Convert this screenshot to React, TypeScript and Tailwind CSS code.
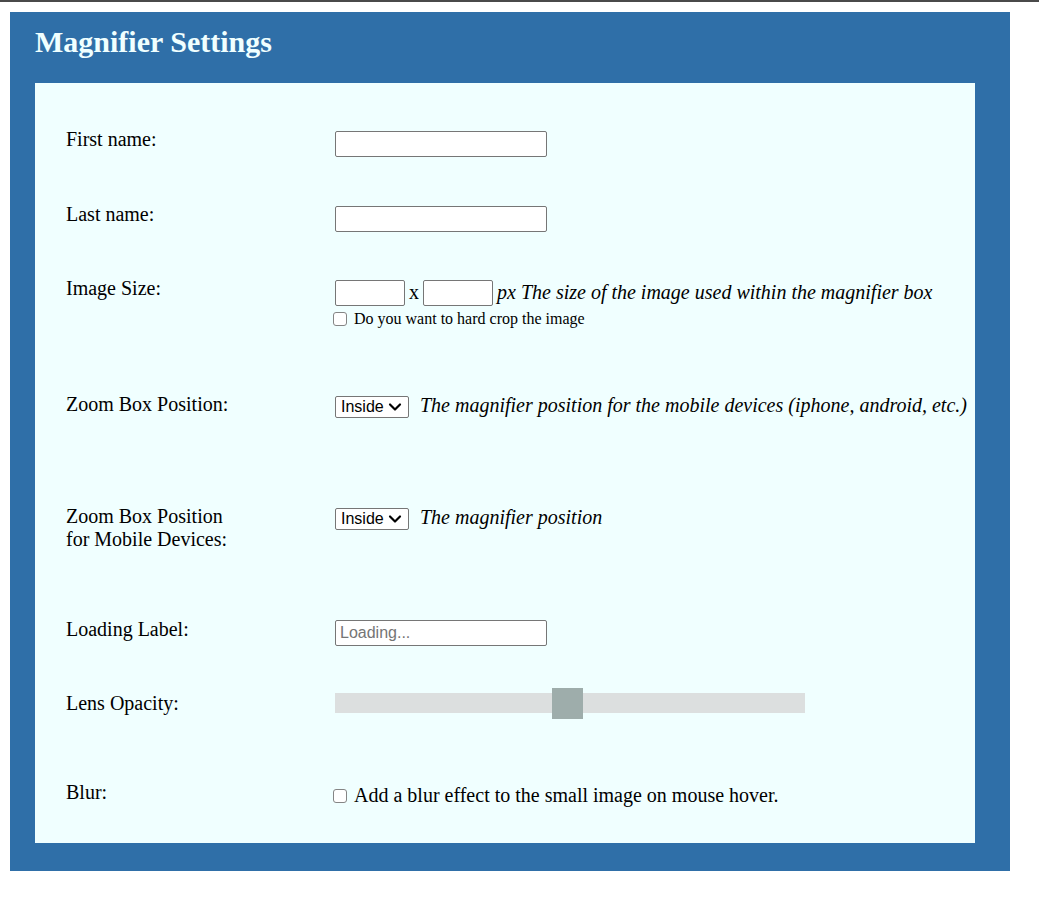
import { ChevronDown } from 'lucide-react';

function TextBox({ width = 'w-[212px]', placeholder }: { width?: string; placeholder?: string }) {
    return (
        <input
            type="text"
            placeholder={placeholder}
            className={`block ${width} h-[26px] border border-[#767676] rounded-[2px] bg-white px-[4px] text-[16px] font-['Liberation_Sans',Arial,sans-serif] text-black placeholder:text-[#757575] outline-none`}
        />
    );
}

function Select() {
    return (
        <div className="relative w-[74px] h-[22px] shrink-0">
            <select className="block appearance-none w-full h-full border border-[#767676] rounded-[2px] bg-white pl-[5px] pr-[16px] text-[16px] leading-none font-['Liberation_Sans',Arial,sans-serif] text-black outline-none">
                <option>Inside</option>
                <option>Outside</option>
            </select>
            <ChevronDown
                size={20}
                strokeWidth={2.6}
                className="absolute left-[50px] top-[1px] pointer-events-none text-black"
            />
        </div>
    );
}

function Check() {
    return (
        <input
            type="checkbox"
            className="block m-0 w-[14px] h-[14px] shrink-0 appearance-none border border-[#858585] rounded-[3px] bg-white"
        />
    );
}

function Row({ label, height, children }: { label: React.ReactNode; height: string; children: React.ReactNode }) {
    return (
        <div className={`flex items-start ${height}`}>
            <div className="w-[269px] shrink-0 leading-[23px]">{label}</div>
            <div className="flex-1 min-w-0">{children}</div>
        </div>
    );
}

export default function App() {
    return (
        <div className="min-h-[918px] bg-white font-['Liberation_Serif','Times_New_Roman',serif] text-black">
            <div className="h-[2px] bg-[#4a4a4a]" />

            <div className="ml-[10px] mt-[10px] w-[1000px] bg-[#2f6fa8] pl-[25px] pr-[35px] pb-[28px]">
                {/* Header */}
                <h1 className="pt-[13px] pb-[24px] text-[30px] leading-[34px] font-bold text-[#f0ffff]">
                    Magnifier Settings
                </h1>

                {/* Form */}
                <div className="bg-[#f0ffff] pt-[45px] pl-[31px] text-[20px]">
                    <Row label="First name:" height="h-[75px]">
                        <div className="flex mt-[3px]">
                            <TextBox />
                        </div>
                    </Row>

                    <Row label="Last name:" height="h-[74px]">
                        <div className="flex mt-[3px]">
                            <TextBox />
                        </div>
                    </Row>

                    <Row label="Image Size:" height="h-[116px]">
                        <div className="mt-[3px] flex items-start leading-[23px]">
                            <TextBox width="w-[70px]" />
                            <span className="mt-[1px] ml-[4px] mr-[4px]">x</span>
                            <TextBox width="w-[70px]" />
                            <span className="mt-[1px] ml-[4px] italic whitespace-nowrap">
                                px The size of the image used within the magnifier box
                            </span>
                        </div>
                        <label className="-ml-[2px] mt-[4px] flex items-center gap-[7px] text-[16px] leading-[18px]">
                            <Check />
                            Do you want to hard crop the image
                        </label>
                    </Row>

                    <Row label="Zoom Box Position:" height="h-[112px]">
                        <div className="flex items-start gap-[11px] leading-[23px]">
                            <div className="mt-[3px]">
                                <Select />
                            </div>
                            <span className="mt-[1px] italic whitespace-nowrap">
                                The magnifier position for the mobile devices (iphone, android, etc.)
                            </span>
                        </div>
                    </Row>

                    <Row
                        label={
                            <>
                                Zoom Box Position
                                <br />
                                for Mobile Devices:
                            </>
                        }
                        height="h-[113px]"
                    >
                        <div className="flex items-start gap-[11px] leading-[23px]">
                            <div className="mt-[3px]">
                                <Select />
                            </div>
                            <span className="mt-[1px] italic">The magnifier position</span>
                        </div>
                    </Row>

                    <Row label="Loading Label:" height="h-[74px]">
                        <div className="flex mt-[2px]">
                            <TextBox placeholder="Loading..." />
                        </div>
                    </Row>

                    <Row label="Lens Opacity:" height="h-[89px]">
                        <div className="relative mt-[1px] w-[470px] h-[20px] bg-[#dcdfdf]">
                            <div className="absolute left-[217px] top-[-5px] w-[31px] h-[31px] bg-[#9eadab]" />
                        </div>
                    </Row>

                    <Row label="Blur:" height="h-[62px]">
                        <label className="-ml-[2px] mt-[3px] flex items-center gap-[7px] leading-[23px]">
                            <Check />
                            Add a blur effect to the small image on mouse hover.
                        </label>
                    </Row>
                </div>
            </div>
        </div>
    );
}
